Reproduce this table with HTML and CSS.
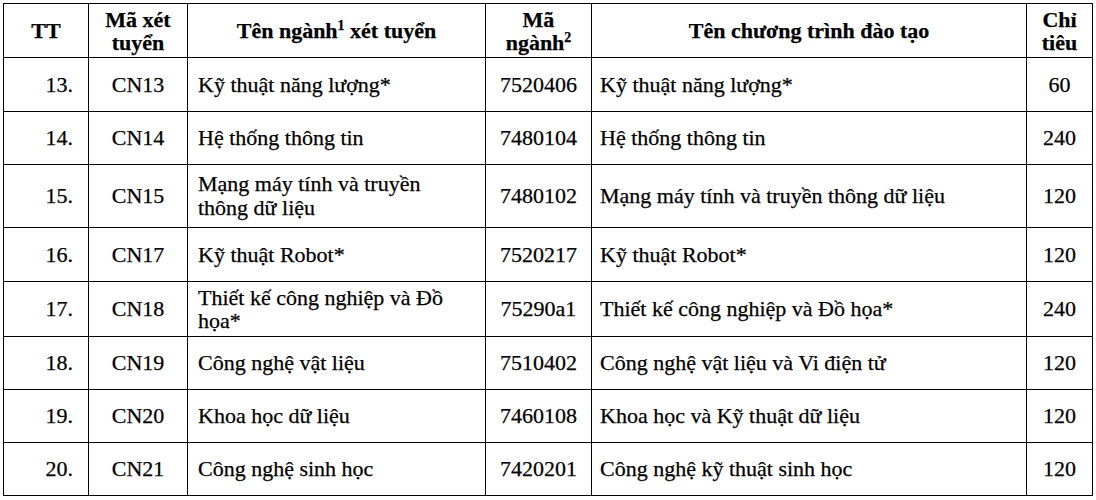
FILE: index.html
```html
<!DOCTYPE html>
<html lang="vi">
<head>
<meta charset="utf-8">
<title>Bảng ngành xét tuyển</title>
<link rel="stylesheet" href="styles.css">
</head>
<body>
<table class="tbl">
  <colgroup>
    <col class="c-tt">
    <col class="c-ma">
    <col class="c-ten">
    <col class="c-mn">
    <col class="c-ct">
    <col class="c-chi">
  </colgroup>
  <thead>
    <tr class="r-head">
      <th>TT</th>
      <th>Mã xét<br>tuyển</th>
      <th>Tên ngành<sup>1</sup> xét tuyển</th>
      <th>Mã<br>ngành<sup>2</sup></th>
      <th>Tên chương trình đào tạo</th>
      <th>Chỉ<br>tiêu</th>
    </tr>
  </thead>
  <tbody>
    <tr class="r-54">
      <td class="num">13.</td><td class="ctr">CN13</td><td class="txt">Kỹ thuật năng lượng*</td><td class="ctr">7520406</td><td class="txt prog">Kỹ thuật năng lượng*</td><td class="ctr">60</td>
    </tr>
    <tr class="r-53">
      <td class="num">14.</td><td class="ctr">CN14</td><td class="txt">Hệ thống thông tin</td><td class="ctr">7480104</td><td class="txt prog">Hệ thống thông tin</td><td class="ctr">240</td>
    </tr>
    <tr class="r-63">
      <td class="num">15.</td><td class="ctr">CN15</td><td class="txt">Mạng máy tính và truyền thông dữ liệu</td><td class="ctr">7480102</td><td class="txt prog">Mạng máy tính và truyền thông dữ liệu</td><td class="ctr">120</td>
    </tr>
    <tr class="r-54">
      <td class="num">16.</td><td class="ctr">CN17</td><td class="txt">Kỹ thuật Robot*</td><td class="ctr">7520217</td><td class="txt prog">Kỹ thuật Robot*</td><td class="ctr">120</td>
    </tr>
    <tr class="r-55">
      <td class="num">17.</td><td class="ctr">CN18</td><td class="txt tight">Thiết kế công nghiệp và Đồ họa*</td><td class="ctr">75290a1</td><td class="txt prog">Thiết kế công nghiệp và Đồ họa*</td><td class="ctr">240</td>
    </tr>
    <tr class="r-53">
      <td class="num">18.</td><td class="ctr">CN19</td><td class="txt">Công nghệ vật liệu</td><td class="ctr">7510402</td><td class="txt prog">Công nghệ vật liệu và Vi điện tử</td><td class="ctr">120</td>
    </tr>
    <tr class="r-53">
      <td class="num">19.</td><td class="ctr">CN20</td><td class="txt">Khoa học dữ liệu</td><td class="ctr">7460108</td><td class="txt prog">Khoa học và Kỹ thuật dữ liệu</td><td class="ctr">120</td>
    </tr>
    <tr class="r-53">
      <td class="num">20.</td><td class="ctr">CN21</td><td class="txt">Công nghệ sinh học</td><td class="ctr">7420201</td><td class="txt prog">Công nghệ kỹ thuật sinh học</td><td class="ctr">120</td>
    </tr>
  </tbody>
</table>
</body>
</html>
```
FILE: styles.css
```css
html, body {
  margin: 0;
  padding: 0;
  background: #ffffff;
}

body {
  padding: 3px 0 0 3px;
  font-family: "Liberation Serif", "Times New Roman", serif;
  font-size: 22px;
  color: #000000;
}

.tbl {
  border-collapse: collapse;
  table-layout: fixed;
  width: 1090px;
}

.c-tt { width: 85px; }
.c-ma { width: 99px; }
.c-ten { width: 298px; }
.c-mn { width: 106px; }
.c-ct { width: 435px; }
.c-chi { width: 66px; }

.tbl th,
.tbl td {
  border: 1px solid #000000;
  padding: 0 6px;
  vertical-align: middle;
  line-height: 24px;
  -webkit-text-stroke: 0.25px #000000;
}

.tbl th {
  font-weight: bold;
  text-align: center;
  line-height: 23px;
}

.tbl sup {
  font-size: 14px;
  line-height: 0;
  vertical-align: 8px;
}

.r-head { height: 54px; }
.r-53 { height: 53px; }
.r-54 { height: 54px; }
.r-55 { height: 55px; }
.r-63 { height: 63px; }

.tbl .num {
  text-align: right;
  padding-right: 15px;
}

.tbl .ctr {
  text-align: center;
}

.tbl .txt {
  text-align: left;
  padding-left: 10px;
  padding-right: 20px;
}

.tbl .prog {
  padding-left: 8px;
}

.tbl .tight {
  line-height: 23px;
}
```
